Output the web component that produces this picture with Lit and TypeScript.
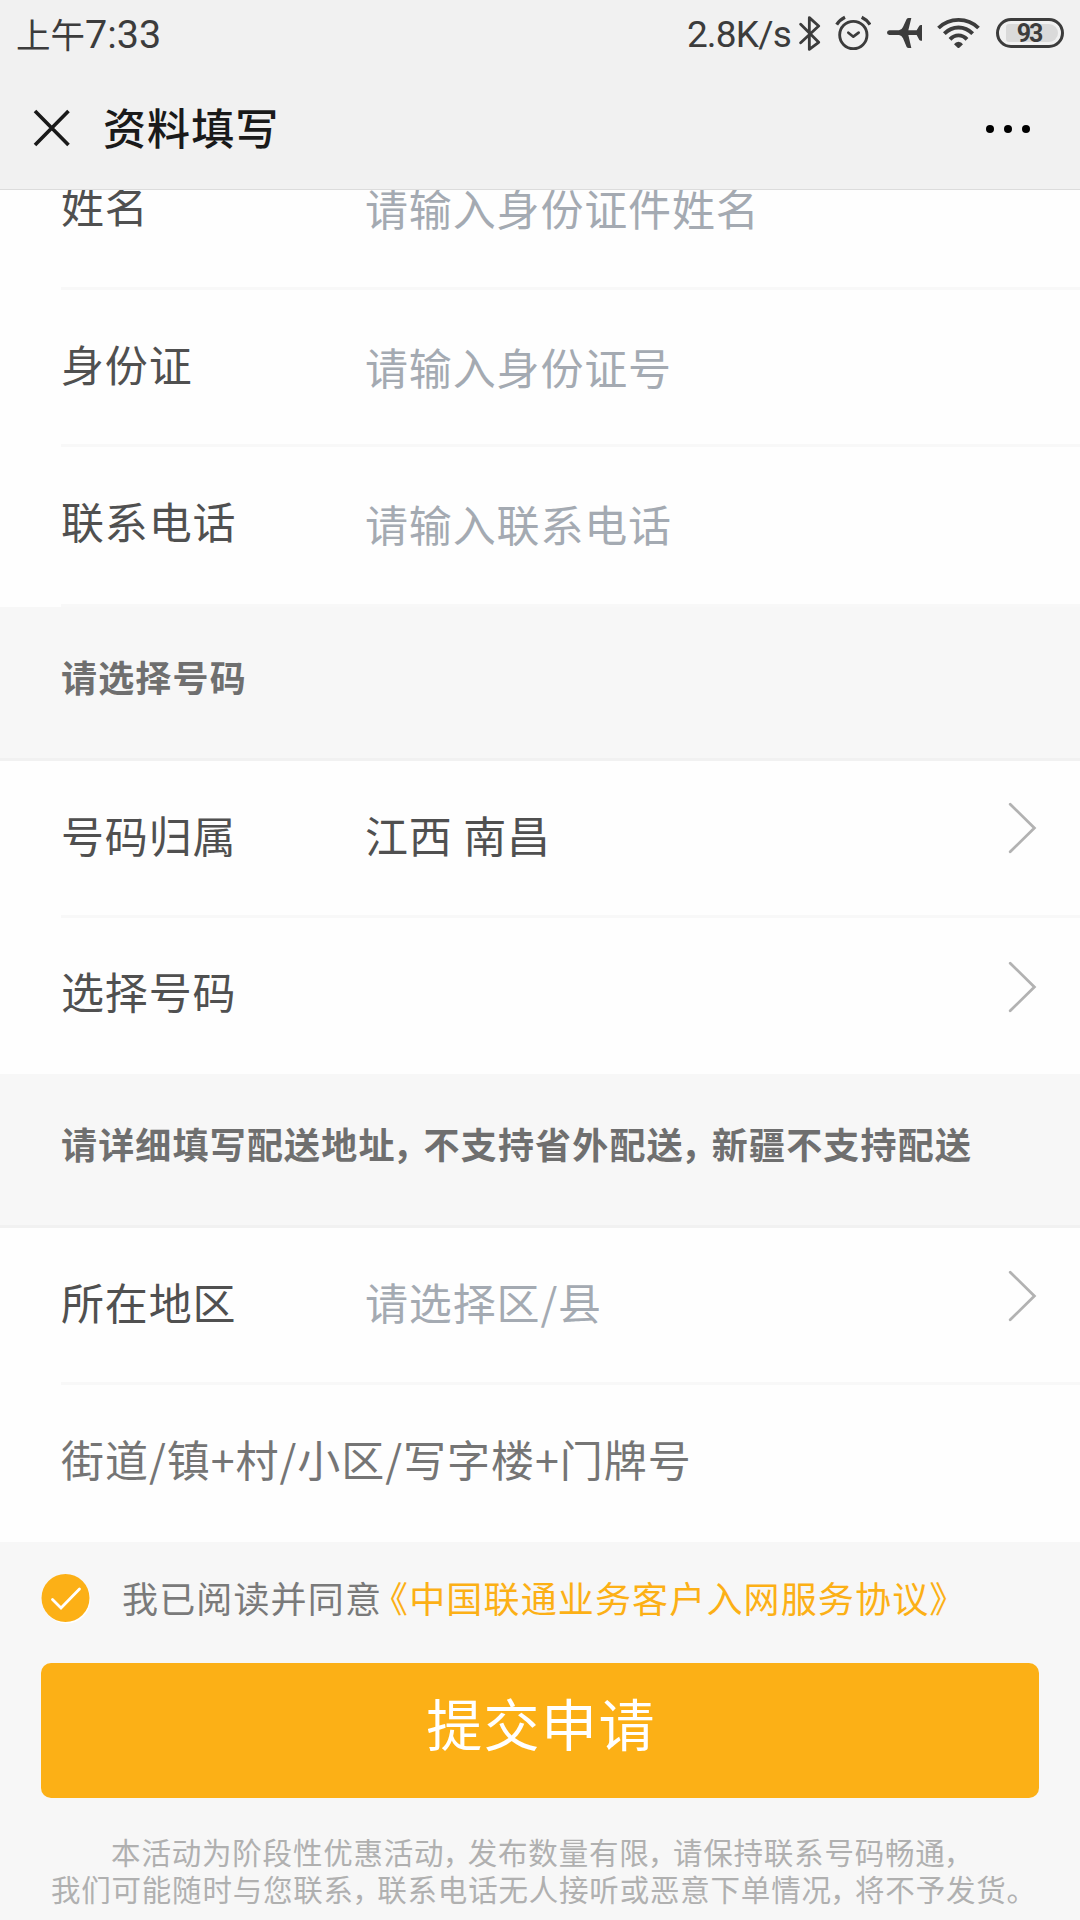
import { LitElement, html, css, svg, nothing } from "lit";
import { customElement, property } from "lit/decorators.js";

const chevron = html`<svg class="chevron" width="29" height="52" viewBox="0 0 29 52">
  <path d="M2.2 2.2 26.4 26 2.2 49.8" fill="none" stroke="#b2b2b2" stroke-width="2.8" stroke-linecap="round" />
</svg>`;

/* Full-width commas are set tighter than a full em, close to the character before them. */
const spaced = (text: string) =>
  text
    .split(/(.，)/)
    .map((part) =>
      part.length === 2 && part.endsWith("，")
        ? html`<span class="before">${part[0]}</span><span class="comma">，</span>`
        : part
    );

@customElement("status-bar")
export class StatusBar extends LitElement {
  static styles = css`
    :host {
      display: flex;
      align-items: flex-start;
      height: 66px;
      box-sizing: border-box;
      padding: 0 16px 0 16px;
      color: #3c3c3c;
      font-family: Roboto, "Noto Sans CJK SC", sans-serif;
    }
    .time {
      flex: 1;
      font-size: 39.5px;
      line-height: 66px;
      padding-top: 2px;
      white-space: nowrap;
    }
    .period {
      font-size: 34.5px;
    }
    .speed {
      font-size: 37px;
      line-height: 66px;
      letter-spacing: -0.8px;
      padding-top: 2px;
      margin-right: 8px;
      white-space: nowrap;
    }
    svg {
      display: block;
      flex: none;
      margin-top: 15px;
    }
    .alarm {
      margin-left: 14px;
    }
    .plane {
      margin-left: 15px;
    }
    .wifi {
      margin-left: 14px;
    }
    .battery {
      flex: none;
      box-sizing: border-box;
      width: 68px;
      height: 30px;
      margin: 18px 0 0 16px;
      border: 3px solid #3c3c3c;
      border-radius: 15px;
      padding: 3px 3px 3px 7px;
    }
    .level {
      height: 18px;
      border-radius: 3px 9px 9px 3px;
      background: #dadada;
      font-size: 25px;
      font-weight: 700;
      line-height: 19px;
      letter-spacing: -2px;
      padding-right: 6px;
      text-align: center;
    }
  `;

  render() {
    return html`
      <div class="time"><span class="period">上午</span>7:33</div>
      <div class="speed">2.8K/s</div>
      <svg width="22" height="36" viewBox="0 0 66 108">
        <path d="M5 29 59 83 31 104V9L59 34 5 84" transform="translate(0 -1)" fill="none" stroke="#3c3c3c" stroke-width="8.5" stroke-linejoin="round" stroke-linecap="round" />
      </svg>
      <svg class="alarm" width="36" height="36" viewBox="0 0 108 108">
        <g fill="none" stroke="#3c3c3c">
          <circle cx="55" cy="60" r="41" stroke-width="8.5" />
          <path d="M40 53 55 65 71 53" stroke-width="8" stroke-linecap="round" stroke-linejoin="round" />
          <path d="M5 29Q15 14 30 7M80 7Q95 14 105 29" stroke-width="10" />
        </g>
      </svg>
      <svg class="plane" width="37" height="36" viewBox="0 0 111 108">
        <path fill="#3c3c3c" d="M10 46H39Q47 45 51 36L62 12Q64 9 68 9H76L67 46H92L100 32Q102 30 105 30H108V77H105Q102 77 100 75L92 60H67L76 99H68Q64 99 62 96L51 70Q47 61 39 60H10Q3 59 3 53 3 47 10 46Z" />
      </svg>
      <svg class="wifi" width="43" height="36" viewBox="0 0 129 108">
        <g fill="none" stroke="#3c3c3c" stroke-width="11.5">
          <path d="M4.500 39Q29 14.500 64.500 14.500 100 14.500 124.500 39" />
          <path d="M22 56Q40 37.500 64.500 37.500 89 37.500 107 56" />
          <path d="M39 73Q50 61 64.500 61 79 61 90 73" />
        </g>
        <path fill="#3c3c3c" d="M51 88Q56 80 64.500 80 73 80 78 88L67 98Q64.500 100 62 98Z" />
      </svg>
      <div class="battery"><div class="level">93</div></div>
    `;
  }
}

@customElement("nav-bar")
export class NavBar extends LitElement {
  static styles = css`
    :host {
      display: flex;
      align-items: center;
      height: 124px;
      box-sizing: border-box;
      padding: 0 49px 0 33px;
      border-bottom: 1px solid #dcdcdc;
      color: #1a1a1a;
      font-family: "Noto Sans CJK SC", sans-serif;
    }
    .title {
      flex: 1;
      margin: 0 0 3px 32px;
      font-size: 43px;
      font-weight: 500;
      line-height: 60px;
      letter-spacing: 1.1px;
    }
    svg {
      display: block;
    }
    .more {
      margin-top: 2px;
    }
  `;

  render() {
    return html`
      <svg width="38" height="38" viewBox="0 0 38 38">
        <path d="M2 2 35.500 36M35.500 2 2 36" stroke="#1a1a1a" stroke-width="3.600" />
      </svg>
      <div class="title">资料填写</div>
      <svg class="more" width="46" height="8" viewBox="0 0 46 8">
        ${[5, 23, 41].map((x) => svg`<circle cx=${x} cy="4" r="4" fill="#000" />`)}
      </svg>
    `;
  }
}

@customElement("form-row")
export class FormRow extends LitElement {
  @property() label = "";
  @property() value = "";
  @property() placeholder = "";
  @property({ type: Boolean }) link = false;

  static styles = css`
    :host {
      display: flex;
      height: 156.67px;
      box-sizing: border-box;
      padding: 0 43px 0 61px;
      font-family: "Noto Sans CJK SC", sans-serif;
      font-size: 43px;
      line-height: 60px;
      letter-spacing: 0.85px;
      color: #505050;
      white-space: nowrap;
    }
    .label,
    .value,
    .placeholder {
      padding-top: 42.8px;
    }
    .label {
      width: 304px;
    }
    .value,
    .placeholder {
      flex: 1;
    }
    .placeholder {
      color: #a4aab2;
    }
    .typed {
      padding-top: 45.8px;
    }
    .chevron {
      display: block;
      margin-top: var(--chevron-top, 43.5px);
    }
  `;

  render() {
    return html`
      <div class="label">${this.label}</div>
      ${this.value
        ? html`<div class="value">${this.value}</div>`
        : html`<div class="placeholder ${this.link ? "" : "typed"}">${this.placeholder}</div>`}
      ${this.link ? chevron : nothing}
    `;
  }
}

@customElement("app-root")
export class AppRoot extends LitElement {
  static styles = css`
    :host {
      display: flex;
      flex-direction: column;
      width: 1080px;
      height: 1920px;
      overflow: hidden;
      background: #f7f7f7;
      font-family: "Noto Sans CJK SC", sans-serif;
    }
    .top {
      flex: none;
      background: #f1f1f1;
    }
    .content {
      flex: 1;
      min-height: 0;
      overflow: hidden;
    }
    .group {
      background: #fefefe;
    }
    .personal {
      margin-top: -58px;
      padding-top: 1.6px;
      padding-bottom: 0.4px;
    }
    .divider {
      height: 3px;
      margin: -3px 0 0 61px;
      background: #f8f8f8;
    }
    .divider.last {
      margin-top: 0;
    }
    .pick {
      --chevron-top: 41.5px;
    }
    .personal form-row:first-child {
      margin-top: -2.6px;
      margin-bottom: 2.6px;
    }
    .section {
      box-sizing: border-box;
      height: 154px;
      padding: 42px 0 0 61px;
      border-bottom: 3px solid #f1f1f1;
      color: #6f6f6f;
      font-size: 36px;
      font-weight: 700;
      line-height: 54px;
      letter-spacing: 1.18px;
      white-space: nowrap;
    }
    .section .before {
      letter-spacing: -2px;
    }
    .section .comma {
      letter-spacing: -4.9px;
    }
    .street {
      box-sizing: border-box;
      height: 156.67px;
      padding: 42.8px 0 0 61px;
      color: #757575;
      font-size: 43px;
      line-height: 60px;
      letter-spacing: 0.96px;
    }
    .consent {
      display: flex;
      align-items: center;
      height: 54px;
      margin-top: 30px;
      padding-left: 41px;
      font-size: 36px;
      line-height: 54px;
      letter-spacing: 1.15px;
      color: #7a7a7a;
      white-space: nowrap;
    }
    .consent span {
      padding-bottom: 4px;
    }
    .tick {
      display: block;
      margin-right: 31px;
    }
    .agreement {
      color: #fcb016;
      margin-left: 8px;
    }
    .agreement .open {
      font-feature-settings: "halt";
    }
    .submit {
      display: block;
      box-sizing: border-box;
      width: 998px;
      height: 135px;
      margin: 37px 41px 0;
      padding: 0 0 16px 2px;
      border: 0;
      border-radius: 10px;
      background: #fcb016;
      color: #fff;
      font-family: inherit;
      font-size: 56px;
      line-height: 80px;
      letter-spacing: 1.4px;
      text-align: center;
    }
    .notice {
      margin-top: 35px;
      color: #b0b0b0;
      font-size: 29.5px;
      line-height: 37.4px;
      letter-spacing: 0.8px;
      text-align: center;
      white-space: nowrap;
    }
    .notice .before {
      letter-spacing: -1px;
    }
    .notice .comma {
      letter-spacing: -4.4px;
    }
    .notice .stop {
      letter-spacing: -7px;
    }
  `;

  render() {
    return html`
      <div class="top">
        <status-bar></status-bar>
        <nav-bar></nav-bar>
      </div>
      <div class="content">
        <div class="group personal">
          <form-row label="姓名" placeholder="请输入身份证件姓名"></form-row>
          <div class="divider"></div>
          <form-row label="身份证" placeholder="请输入身份证号"></form-row>
          <div class="divider"></div>
          <form-row label="联系电话" placeholder="请输入联系电话"></form-row>
          <div class="divider last"></div>
        </div>
        <div class="section">请选择号码</div>
        <div class="group">
          <form-row class="pick" link label="号码归属" value="江西 南昌"></form-row>
          <div class="divider"></div>
          <form-row link label="选择号码"></form-row>
        </div>
        <div class="section">${spaced("请详细填写配送地址，不支持省外配送，新疆不支持配送")}</div>
        <div class="group">
          <form-row class="pick" link label="所在地区" placeholder="请选择区/县"></form-row>
          <div class="divider"></div>
          <div class="street">街道/镇+村/小区/写字楼+门牌号</div>
        </div>
        <div class="consent">
          <svg class="tick" width="50" height="50" viewBox="0 0 50 50">
            <circle cx="25.500" cy="25.500" r="24" fill="#fff" />
            <circle cx="24.500" cy="24" r="24" fill="#fcb016" />
            <path d="M11.500 25.500 20 34 38.500 15" fill="none" stroke="#fff" stroke-width="2.800" stroke-linecap="round" />
          </svg>
          <span>我已阅读并同意</span><span class="agreement"><span class="open">《</span>中国联通业务客户入网服务协议》</span>
        </div>
        <button class="submit">提交申请</button>
        <div class="notice">
          <div>${spaced("本活动为阶段性优惠活动，发布数量有限，请保持联系号码畅通，")}</div>
          <div>${spaced("我们可能随时与您联系，联系电话无人接听或恶意下单情况，将不予发货")}<span class="stop">。</span></div>
        </div>
      </div>
    `;
  }
}
